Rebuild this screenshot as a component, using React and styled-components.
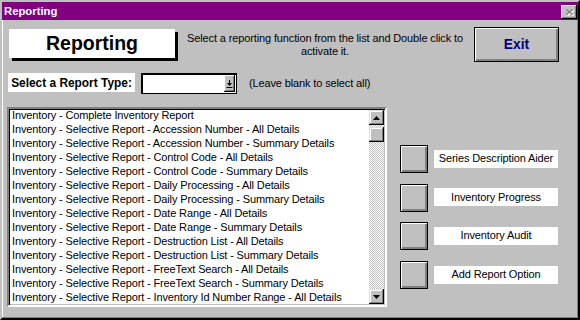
import styled, { createGlobalStyle } from "styled-components";

const Global = createGlobalStyle`
  body {
    margin: 0;
    background: #c0c0c0;
    font-family: "Liberation Sans", Arial, sans-serif;
  }
`

const reports = [
    "Inventory - Complete Inventory Report",
    "Inventory - Selective Report - Accession Number - All Details",
    "Inventory - Selective Report - Accession Number - Summary Details",
    "Inventory - Selective Report - Control Code - All Details",
    "Inventory - Selective Report - Control Code - Summary Details",
    "Inventory - Selective Report - Daily Processing - All Details",
    "Inventory - Selective Report - Daily Processing - Summary Details",
    "Inventory - Selective Report - Date Range - All Details",
    "Inventory - Selective Report - Date Range - Summary Details",
    "Inventory - Selective Report - Destruction List - All Details",
    "Inventory - Selective Report - Destruction List - Summary Details",
    "Inventory - Selective Report - FreeText Search - All Details",
    "Inventory - Selective Report - FreeText Search - Summary Details",
    "Inventory - Selective Report - Inventory Id Number Range - All Details",
]

const sideOptions = [
    "Series Description Aider",
    "Inventory Progress",
    "Inventory Audit",
    "Add Report Option",
]

const Ventana = styled.div`
    width: 580px;
    height: 320px;
    box-sizing: border-box;
    background: #c0c0c0;
    border: 2px solid;
    border-color: #c0c0c0 #000 #000 #c0c0c0;
    box-shadow: inset -1px -1px #808080, inset 1px 1px #fff;
    display: flex;
    flex-direction: column;
    overflow: hidden;
`
const BarraTitulo = styled.div`
    height: 18px;
    background: #800080;
    display: flex;
    align-items: center;
    justify-content: space-between;
    padding: 0 0 0 2px;
    color: #fff;
    font-weight: bold;
    font-size: 11.3px;
`
const BotonCerrar = styled.div`
    width: 16px;
    height: 14px;
    margin-right: 1px;
    margin-top: 1px;
    background: #c0c0c0;
    box-shadow: inset -1px -1px #000, inset 1px 1px #fff, inset -2px -2px #808080;
    display: flex;
    align-items: center;
    justify-content: center;
`
const Cabecera = styled.div`
    display: flex;
    align-items: flex-start;
    height: 35px;
    margin-top: 7px;
    padding: 0 19px 0 7px;
`
const CajaTitulo = styled.div`
    width: 166px;
    height: 29px;
    margin-top: 2px;
    background: #fff;
    box-shadow: 3px 3px 0 #000;
    display: flex;
    align-items: center;
    justify-content: center;
    font-family: "Liberation Sans", Arial, sans-serif;
    font-weight: bold;
    font-size: 19.5px;
    color: #000;
`
const Texto = styled.div`
    font-size: 11px;
    letter-spacing: -0.13px;
    color: #000;
    line-height: 13px;
`
const Instrucciones = styled(Texto)`
    width: 280px;
    margin: 5px 0 0 10px;
    text-align: center;
`
const BotonSalir = styled.button`
    margin-left: auto;
    width: 85px;
    height: 35px;
    box-sizing: border-box;
    border: 1px solid #000;
    background: #c0c0c0;
    box-shadow: inset 1px 1px #fff, inset -1px -1px #808080, inset -2px -2px #808080;
    color: #000080;
    font-family: "Liberation Sans", Arial, sans-serif;
    font-weight: bold;
    font-size: 13.8px;
    padding: 0;
`
const FilaTipo = styled.div`
    display: flex;
    align-items: flex-start;
    margin-top: 11px;
    padding-left: 6px;
    height: 21px;
`
const Etiqueta = styled.div`
    width: 127px;
    height: 19px;
    background: #fff;
    display: flex;
    align-items: center;
    justify-content: center;
    font-weight: bold;
    font-size: 11.9px;
    color: #000;
`
const Combo = styled.div`
    width: 96px;
    height: 21px;
    margin-left: 6px;
    box-sizing: border-box;
    border: 1px solid #000;
    box-shadow: inset 1px 1px #000;
    background: #fff;
    display: flex;
    justify-content: flex-end;
    padding: 1px;
`
const BotonCombo = styled.div`
    width: 11px;
    height: 17px;
    background: #c0c0c0;
    box-shadow: inset -1px -1px #000, inset 1px 1px #fff, inset -2px -2px #808080;
    display: flex;
    align-items: center;
    justify-content: center;
`
const Pista = styled(Texto)`
    margin: 4px 0 0 12px;
`
const Principal = styled.div`
    display: flex;
    margin-top: 13px;
    padding-left: 5px;
`
const Lista = styled.div`
    width: 380px;
    height: 200px;
    box-sizing: border-box;
    border: 2px solid;
    border-color: #808080 #fff #fff #808080;
    display: flex;
`
const ListaInterior = styled.div`
    flex: 1;
    display: flex;
    background: #fff;
    box-shadow: inset 1px 1px #000, inset -1px -1px #c0c0c0;
    padding: 1px;
`
const Items = styled.div`
    flex: 1;
    padding: 0 0 0 2px;
    margin-top: -2px;
`
const Item = styled(Texto)`
    height: 14px;
    line-height: 14px;
    white-space: nowrap;
`
const Scroll = styled.div`
    width: 15px;
    display: flex;
    flex-direction: column;
    background: repeating-conic-gradient(#c0c0c0 0 25%, #fff 0 50%) 0 0 / 2px 2px;
`
const BotonScroll = styled.div`
    width: 15px;
    height: 15px;
    background: #c0c0c0;
    box-shadow: inset -1px -1px #000, inset 1px 1px #dfdfdf, inset -2px -2px #808080, inset 2px 2px #fff;
    display: flex;
    align-items: center;
    justify-content: center;
    margin-top: ${p => p.$abajo ? "auto" : "0"};
`
const Pulgar = styled(BotonScroll)`
    margin-top: 2px;
`
const Opciones = styled.div`
    display: flex;
    flex-direction: column;
    gap: 10.7px;
    margin: 38px 0 0 13px;
`
const Opcion = styled.div`
    display: flex;
    align-items: center;
    gap: 6px;
`
const BotonCuadrado = styled.button`
    width: 28px;
    height: 28px;
    box-sizing: border-box;
    border: 1px solid #000;
    background: #c0c0c0;
    box-shadow: inset 1px 1px #fff, inset -1px -1px #808080, inset -2px -2px #808080;
    padding: 0;
`
const EtiquetaOpcion = styled(Texto)`
    width: 124px;
    height: 18px;
    margin-top: -1px;
    background: #fff;
    display: flex;
    align-items: center;
    justify-content: center;
`

const Flecha = ({ abajo }) => (
    <svg width="7" height="4" viewBox="0 0 7 4">
        <path d={abajo ? "M0 0h7L3.5 4z" : "M0 4h7L3.5 0z"} fill="#000" />
    </svg>
)

const App = () => {
    return (
        <>
            <Global />
            <Ventana>
                <BarraTitulo>
                    Reporting
                    <BotonCerrar>
                        <svg width="9" height="8" viewBox="0 0 9 8">
                            <path d="M1.5 1.5l6 5M7.5 1.5l-6 5" stroke="#fff" strokeWidth="1.6" transform="translate(1 1)" />
                            <path d="M1.5 1.5l6 5M7.5 1.5l-6 5" stroke="#808080" strokeWidth="1.6" />
                        </svg>
                    </BotonCerrar>
                </BarraTitulo>
                <Cabecera>
                    <CajaTitulo>Reporting</CajaTitulo>
                    <Instrucciones>
                        Select a reporting function from the list and Double click to activate it.
                    </Instrucciones>
                    <BotonSalir>Exit</BotonSalir>
                </Cabecera>
                <FilaTipo>
                    <Etiqueta>Select a Report Type:</Etiqueta>
                    <Combo>
                        <BotonCombo>
                            <svg width="7" height="8" viewBox="0 0 7 8">
                                <path d="M3 0h1v3h2L3.5 6 1 3h2z" fill="#000" />
                                <rect x="0.5" y="7" width="6" height="1" fill="#000" />
                            </svg>
                        </BotonCombo>
                    </Combo>
                    <Pista>(Leave blank to select all)</Pista>
                </FilaTipo>
                <Principal>
                    <Lista>
                        <ListaInterior>
                            <Items>
                                {reports.map(r => <Item key={r}>{r}</Item>)}
                            </Items>
                            <Scroll>
                                <BotonScroll><Flecha /></BotonScroll>
                                <Pulgar />
                                <BotonScroll $abajo><Flecha abajo /></BotonScroll>
                            </Scroll>
                        </ListaInterior>
                    </Lista>
                    <Opciones>
                        {sideOptions.map(o =>
                            <Opcion key={o}>
                                <BotonCuadrado />
                                <EtiquetaOpcion>{o}</EtiquetaOpcion>
                            </Opcion>)}
                    </Opciones>
                </Principal>
            </Ventana>
        </>
    )
}
export default App
